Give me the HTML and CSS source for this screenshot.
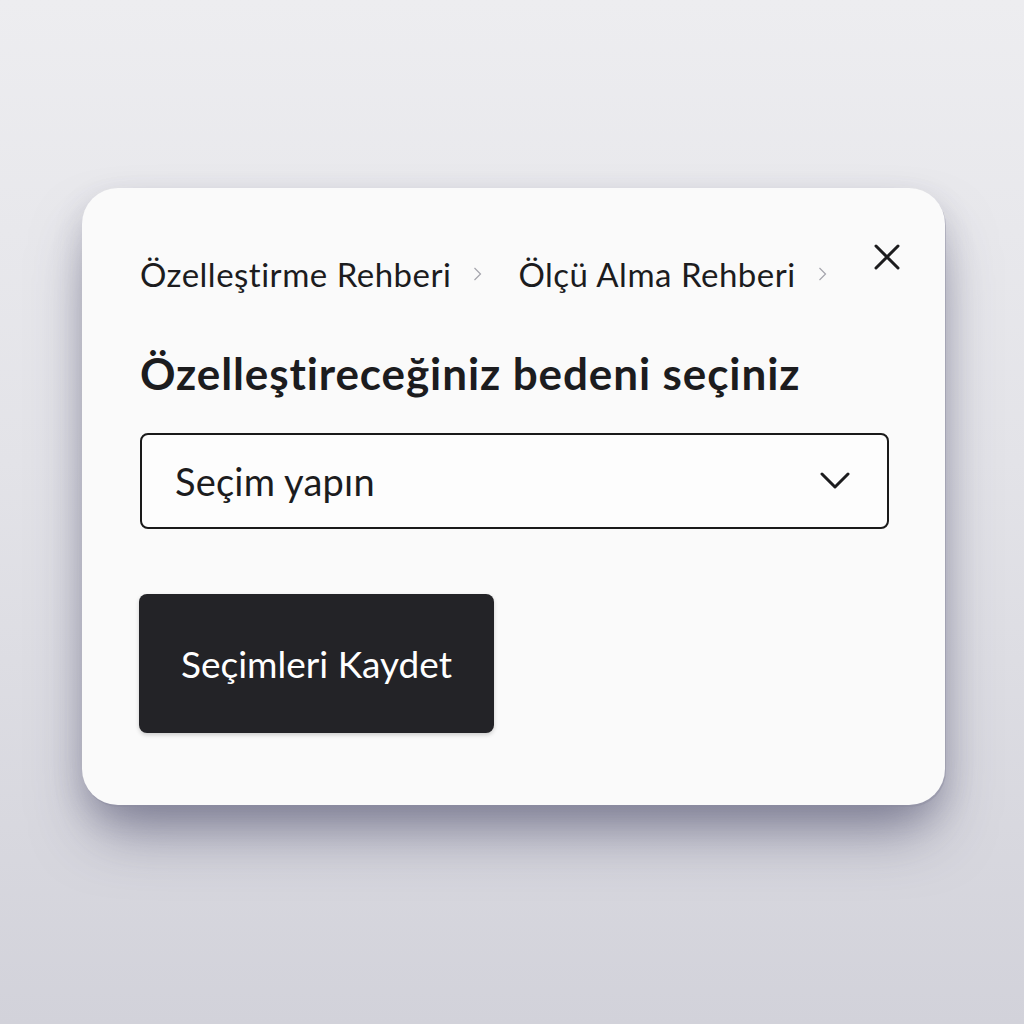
FILE: index.html
```html
<!DOCTYPE html>
<html lang="tr">
<head>
<meta charset="utf-8">
<title>Beden seçimi</title>
<link rel="stylesheet" href="styles.css">
</head>
<body>
<div class="stage">
  <div class="card">
    <button class="close" aria-label="Kapat">
      <svg viewBox="0 0 26 26" width="26" height="26"><path d="M2 2 L24 24 M24 2 L2 24" stroke="#1c1c1e" stroke-width="3" stroke-linecap="round" fill="none"/></svg>
    </button>
    <nav class="crumbs">
      <span class="crumb">Özelleştirme Rehberi</span>
      <svg class="sep" viewBox="0 0 9 14" width="9" height="14"><path d="M1.5 1 L7.5 7 L1.5 13" stroke="#a4a4ac" stroke-width="1.2" fill="none"/></svg>
      <span class="crumb">Ölçü Alma Rehberi</span>
      <svg class="sep" viewBox="0 0 9 14" width="9" height="14"><path d="M1.5 1 L7.5 7 L1.5 13" stroke="#a4a4ac" stroke-width="1.2" fill="none"/></svg>
    </nav>
    <h1 class="title">Özelleştireceğiniz bedeni seçiniz</h1>
    <div class="select">
      <span class="select-text">Seçim yapın</span>
      <svg class="caret" viewBox="0 0 30 18" width="30" height="18"><path d="M2 2 L15 15 L28 2" stroke="#1c1c1e" stroke-width="3" stroke-linecap="round" stroke-linejoin="round" fill="none"/></svg>
    </div>
    <button class="save">Seçimleri Kaydet</button>
  </div>
</div>
</body>
</html>
```

FILE: styles.css
```css
html, body {
  margin: 0;
  padding: 0;
}
body {
  width: 1024px;
  height: 1024px;
  background: linear-gradient(180deg, #ededf0 0%, #e3e3e8 45%, #d2d2da 100%);
  font-family: "Lato", "Roboto", "Noto Sans", sans-serif;
  color: #1c1c1e;
  overflow: hidden;
}
.stage {
  padding: 188px 0 0 82px;
}
.card {
  position: relative;
  box-sizing: border-box;
  width: 863px;
  height: 617px;
  background: #fafafa;
  border-radius: 36px;
  padding: 68px 56px 0 58px;
  box-shadow:
    1px 2px 0 rgba(140, 140, 160, 0.45),
    0 36px 60px -12px rgba(60, 60, 95, 0.55),
    0 12px 30px rgba(70, 70, 100, 0.18);
}
.close {
  position: absolute;
  top: 56px;
  right: 45px;
  width: 26px;
  height: 26px;
  padding: 0;
  border: 0;
  background: none;
  display: block;
}
.close svg { display: block; }
.crumbs {
  display: flex;
  align-items: center;
  height: 36px;
  font-size: 33px;
  line-height: 36px;
  letter-spacing: 0.5px;
}
.crumb { white-space: nowrap; }
.sep {
  margin: 0 36px 0 22px;
  flex: none;
}
.title {
  margin: 55px 0 0;
  font-size: 44px;
  line-height: 52px;
  font-weight: 700;
  letter-spacing: 0.9px;
  white-space: nowrap;
}
.select {
  box-sizing: border-box;
  margin-top: 34px;
  height: 96px;
  border: 2px solid #1a1a1a;
  border-radius: 8px;
  background: #fdfdfd;
  display: flex;
  align-items: center;
  justify-content: space-between;
  padding: 0 37px 0 33px;
}
.select-text {
  font-size: 38px;
  letter-spacing: 0.2px;
}
.caret { display: block; }
.save {
  display: flex;
  align-items: center;
  justify-content: center;
  margin: 65px 0 0 -1px;
  width: 355px;
  height: 139px;
  border: 0;
  border-radius: 8px;
  background: #232327;
  color: #ffffff;
  font-family: inherit;
  font-size: 37px;
  box-shadow: 0 2px 4px rgba(0, 0, 0, 0.18);
}
```
